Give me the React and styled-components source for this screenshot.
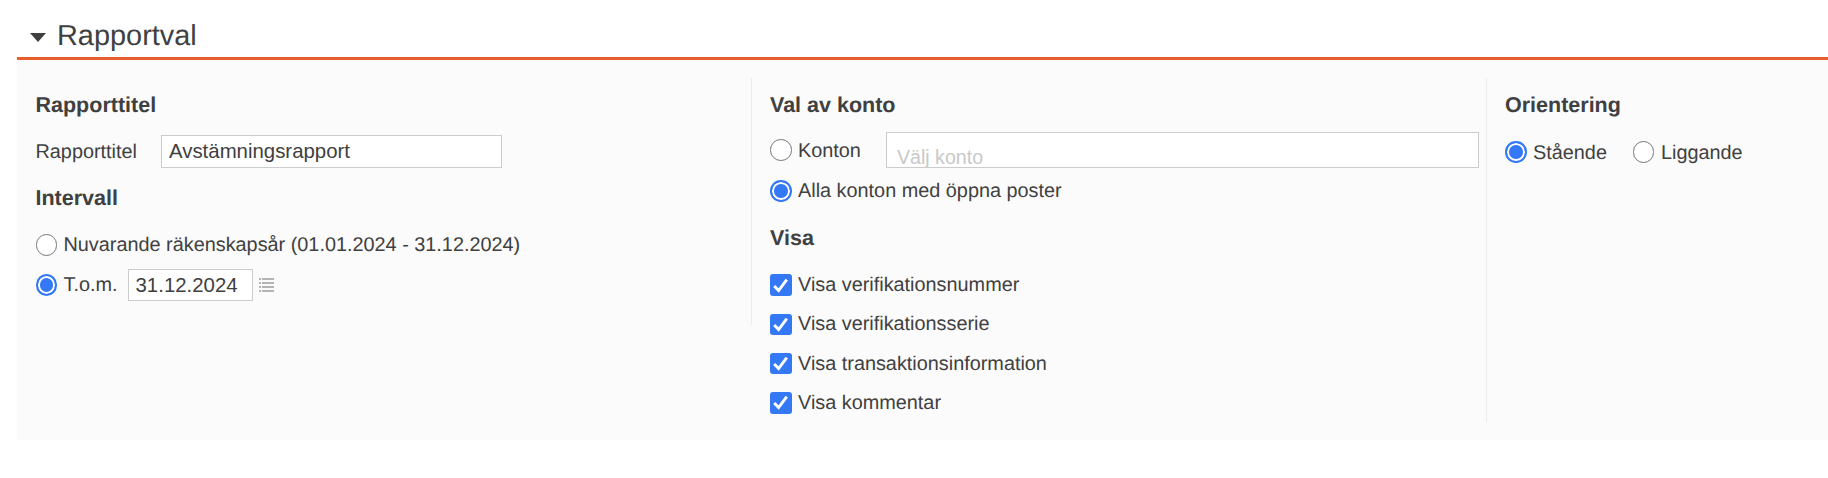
import React from 'react';
import styled, { createGlobalStyle } from 'styled-components';

const GlobalStyle = createGlobalStyle`
  html, body {
    margin: 0;
    padding: 0;
    background: #fff;
  }
  body {
    font-family: 'Liberation Sans', Arial, sans-serif;
    color: #404040;
    text-rendering: geometricPrecision;
    -webkit-font-smoothing: antialiased;
  }
`

const Page = styled.div`
  padding-left: 17px;
  width: 1811px;
`

const SectionHeader = styled.div`
  display: flex;
  align-items: center;
  height: 57px;
  padding: 14px 0 0 13px;
  box-sizing: border-box;
`

const Caret = styled.span`
  width: 0;
  height: 0;
  border-left: 8px solid transparent;
  border-right: 8px solid transparent;
  border-top: 9px solid #404040;
  margin-right: 11px;
  margin-top: 4px;
`

const SectionTitle = styled.h2`
  margin: 0;
  font-size: 28.9px;
  font-weight: 400;
  line-height: 34px;
  color: #404040;
`

const Panel = styled.div`
  display: grid;
  grid-template-columns: 735px 735px 1fr;
  align-items: start;
  border-top: 3px solid #e85d2c;
  background: #fbfbfb;
  padding: 18px 0;
`

const Column = styled.div`
  box-sizing: border-box;
  padding: 15px 7px ${p => p.$bottom || 0}px ${p => p.$left || 18}px;
  border-right: ${p => (p.$divider ? '1px solid #ececec' : '0')};
`

const Heading = styled.h3`
  margin: ${p => p.$top || 0}px 0 0;
  font-size: 21.5px;
  font-weight: 700;
  line-height: 24px;
  color: #404040;
`

const Row = styled.div`
  display: flex;
  align-items: center;
  min-height: 24px;
  margin-top: ${p => p.$top || 0}px;
  font-size: 19.85px;
  line-height: 24px;
`

const FieldLabel = styled.label`
  width: ${p => p.$width}px;
  flex: none;
`

const RadioInput = styled.input.attrs({ type: 'radio' })`
  appearance: none;
  box-sizing: border-box;
  width: 21.5px;
  height: 21.5px;
  margin: 0 6.5px 0 0;
  flex: none;
  border-radius: 50%;
  border: 1.5px solid #767676;
  background: #fff;

  &:checked {
    border: 2px solid #3478f6;
    background: #3478f6;
    box-shadow: inset 0 0 0 2px #fff;
  }
`

const TextInput = styled.input`
  box-sizing: border-box;
  height: ${p => p.$height}px;
  width: ${p => p.$width}px;
  padding: 0 7px;
  border: 1px solid #cccccc;
  border-radius: 0;
  outline: 0;
  background: #fff;
  font: inherit;
  font-size: 20.4px;
  color: #404040;
`

const AccountInput = styled(TextInput)`
  padding: 15px 10px 0;
  font-size: 19.6px;

  &::placeholder {
    color: #c8c8c8;
    opacity: 1;
  }
`

const DateIcon = styled.svg`
  width: 15px;
  height: 14px;
  margin-left: 6px;
  margin-top: -1px;
  flex: none;
  color: #b4b4b4;
`

const CheckList = styled.div`
  display: grid;
  row-gap: 15.33px;
  margin-top: 23px;
`

const CheckRow = styled.label`
  display: flex;
  align-items: center;
  height: 24px;
  font-size: 19.85px;
  line-height: 24px;
`

const CheckBox = styled.span`
  display: flex;
  align-items: center;
  justify-content: center;
  width: 21.5px;
  height: 21.5px;
  margin-right: 6.5px;
  flex: none;
  border-radius: 3px;
  background: #3478f6;
`

const OptionGroup = styled.label`
  display: flex;
  align-items: center;
  margin-right: ${p => p.$gap || 0}px;
`

const OptionText = styled.span`
  padding-top: ${p => (p.$low ? 2 : 0)}px;
`

function Radio({ label, checked, name, gap, low }) {
  return (
    <OptionGroup $gap={gap}>
      <RadioInput name={name} defaultChecked={checked} />
      <OptionText $low={low}>{label}</OptionText>
    </OptionGroup>
  )
}

function CheckItem({ label }) {
  return (
    <CheckRow>
      <CheckBox>
        <svg width="17" height="15" viewBox="0 0 17 15" fill="none">
          <path d="M2.2 8 L6.6 12.6 L14.8 1.6" stroke="#fff" strokeWidth="2.9" />
        </svg>
      </CheckBox>
      {label}
    </CheckRow>
  )
}

export default function App() {
  return (
    <Page>
      <GlobalStyle />
      <SectionHeader>
        <Caret />
        <SectionTitle>Rapportval</SectionTitle>
      </SectionHeader>
      <Panel>
        <Column $divider $left={18.5}>
          <Heading>Rapporttitel</Heading>
          <Row $top={18}>
            <FieldLabel $width={125.5}>Rapporttitel</FieldLabel>
            <TextInput $width={341} $height={33} defaultValue="Avstämningsrapport" />
          </Row>
          <Heading $top={18}>Intervall</Heading>
          <Row $top={23}>
            <Radio name="interval" label="Nuvarande räkenskapsår (01.01.2024 - 31.12.2024)" />
          </Row>
          <Row $top={12}>
            <Radio name="interval" label="T.o.m." checked gap={10} />
            <TextInput $width={125} $height={32} defaultValue="31.12.2024" />
            <DateIcon viewBox="0 0 15 14" fill="currentColor">
              <rect x="0" y="0" width="2" height="2" />
              <rect x="0" y="4" width="2" height="2" />
              <rect x="0" y="8" width="2" height="2" />
              <rect x="0" y="12" width="2" height="2" />
              <rect x="3" y="0" width="12" height="2" />
              <rect x="3" y="4" width="12" height="2" />
              <rect x="3" y="8" width="12" height="2" />
              <rect x="3" y="12" width="12" height="2" />
            </DateIcon>
          </Row>
          <Row />
        </Column>
        <Column $divider $bottom={7}>
          <Heading>Val av konto</Heading>
          <Row $top={15}>
            <FieldLabel $width={116}>
              <Radio name="account" label="Konton" low />
            </FieldLabel>
            <AccountInput $width={594} $height={36} placeholder="Välj konto" />
          </Row>
          <Row $top={11}>
            <Radio name="account" label="Alla konton med öppna poster" checked />
          </Row>
          <Heading $top={23}>Visa</Heading>
          <CheckList>
            <CheckItem label="Visa verifikationsnummer" />
            <CheckItem label="Visa verifikationsserie" />
            <CheckItem label="Visa transaktionsinformation" />
            <CheckItem label="Visa kommentar" />
          </CheckList>
        </Column>
        <Column>
          <Heading>Orientering</Heading>
          <Row $top={22}>
            <Radio name="orientation" label="Stående" checked gap={26} low />
            <Radio name="orientation" label="Liggande" low />
          </Row>
        </Column>
      </Panel>
    </Page>
  )
}
